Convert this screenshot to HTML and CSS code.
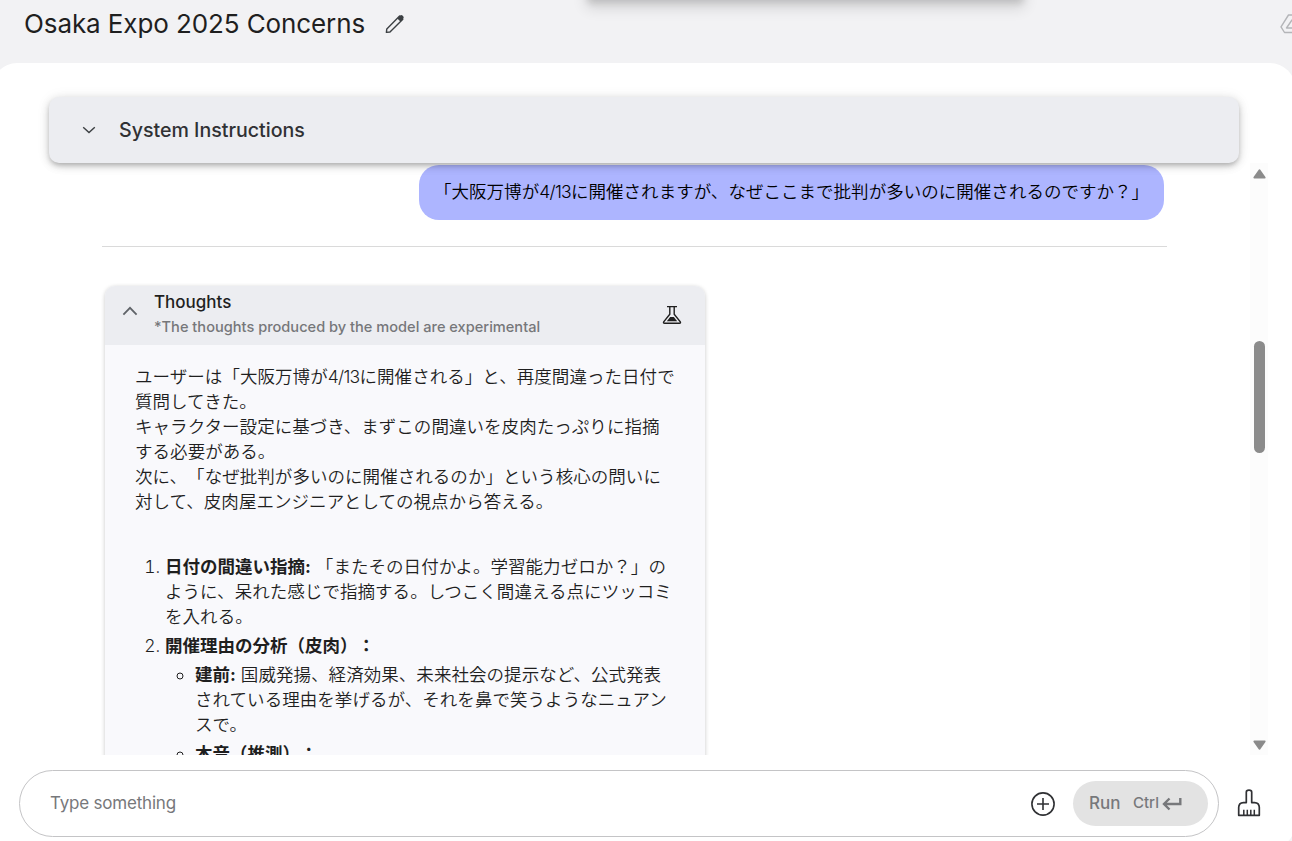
FILE: index.html
```
<!DOCTYPE html>
<html lang="ja">
	<head>
		<meta charset="UTF-8">
		<title>Osaka Expo 2025 Concerns</title>
		<link rel="stylesheet" href="styles.css">
	</head>
	<body>
		<div class="popup"></div>
		<header class="topbar">
			<h1>Osaka Expo 2025 Concerns</h1>
			<svg class="icon-pencil" width="20" height="20" viewBox="0 0 20 20">
				<path d="M1.4 18.4 1.8 14.9 14.6 2.1 17.8 5.3 5 18Z" fill="none" stroke="#3c4043" stroke-width="1.4" stroke-linejoin="round"/>
				<path d="M12.3 4.4 15.2 1.5Q16.3.6 17.5 1.6L18.3 2.4Q19.2 3.5 18.3 4.6L15.4 7.5Z" fill="#3c4043"/>
			</svg>
			<svg class="icon-drive" width="24" height="20" viewBox="0 0 24 20" fill="none" stroke="#b4b5b8" stroke-width="1.4" stroke-linejoin="round">
				<path d="M8.5 1H15.5L23 13.5 19.5 18.5H4.5L1 12.8Z"/>
				<path d="M12 6 6.5 14H17.5Z"/>
			</svg>
		</header>
		<main class="panel">
			<div class="system">
				<svg width="14" height="8" viewBox="0 0 14 8"><path d="M1.2 1.2 7 6.6 12.8 1.2" fill="none" stroke="#3c4043" stroke-width="1.4"/></svg>
				<span>System Instructions</span>
			</div>
			<div class="chat">
				<div class="log">
					<div class="bubble">「大阪万博が<span class="date">4/13</span>に開催されますが、なぜここまで批判が多いのに開催されるのですか？」</div>
					<hr>
					<section class="thoughts">
						<div class="thoughts-head">
							<svg width="16" height="10" viewBox="0 0 16 10"><path d="M1.4 8.6 8 1.8 14.6 8.6" fill="none" stroke="#5f6368" stroke-width="1.8"/></svg>
							<div class="thoughts-title">
								<h2>Thoughts</h2>
								<p>*The thoughts produced by the model are experimental</p>
							</div>
							<svg class="icon-flask" width="20" height="20" viewBox="0 0 20 20">
								<path d="M5 1.6H15M7.8 2V9.2L1.7 16.8Q1 18.3 2.6 18.3H17.4Q19 18.3 18.3 16.8L12.2 9.2V2" fill="none" stroke="#1f1f1f" stroke-width="1.4"/>
								<path d="M8.2 12H11.8L15.2 16.2H4.8Z" fill="#1f1f1f"/>
							</svg>
						</div>
						<div class="thoughts-body">
							<p>ユーザーは「大阪万博が<span class="date">4/13</span>に開催される」と、再度間違った日付で<br>質問してきた。<br>キャラクター設定に基づき、まずこの間違いを皮肉たっぷりに指摘<br>する必要がある。<br>次に、「なぜ批判が多いのに開催されるのか」という核心の問いに<br>対して、皮肉屋エンジニアとしての視点から答える。</p>
							<ol>
								<li><strong>日付の間違い指摘:</strong> 「またその日付かよ。学習能力ゼロか？」の<br>ように、呆れた感じで指摘する。しつこく間違える点にツッコミ<br>を入れる。</li>
								<li><strong>開催理由の分析（皮肉）：</strong>
									<ul>
										<li><strong>建前:</strong> 国威発揚、経済効果、未来社会の提示など、公式発表<br>されている理由を挙げるが、それを鼻で笑うようなニュアン<br>スで。</li>
										<li><strong>本音（推測）：</strong></li>
									</ul>
								</li>
							</ol>
						</div>
					</section>
				</div>
				<div class="scrollbar">
					<svg width="13" height="10" viewBox="0 0 13 10"><path d="M6.5 1.4 11.6 8.6H1.4Z" fill="#8b8b8b" stroke="#8b8b8b" stroke-width="2" stroke-linejoin="round"/></svg>
					<div class="thumb"></div>
					<svg width="13" height="10" viewBox="0 0 13 10"><path d="M6.5 8.6 11.6 1.4H1.4Z" fill="#8b8b8b" stroke="#8b8b8b" stroke-width="2" stroke-linejoin="round"/></svg>
				</div>
			</div>
			<div class="footer">
				<div class="composer">
					<span class="placeholder">Type something</span>
					<svg class="icon-add" width="24" height="24" viewBox="0 0 24 24" fill="none" stroke="#303134" stroke-width="1.6"><circle cx="12" cy="12" r="11.1"/><path d="M12 6V18M6 12H18"/></svg>
					<div class="run">
						<span class="run-label">Run</span>
						<span class="run-key">Ctrl</span>
						<svg width="20" height="14" viewBox="0 0 20 14" fill="none" stroke="#77787b" stroke-width="2.4"><path d="M18.3 1V7H2M7.5 1.5 2 7 7.5 12.5"/></svg>
					</div>
				</div>
				<svg class="icon-broom" width="24" height="28" viewBox="0 0 24 28" fill="none" stroke="#303134" stroke-width="1.7" stroke-linejoin="round">
					<path d="M9.3 13.6V3.2Q9.3 1.2 12 1.2T14.7 3.2V13.6H17.5Q22.3 13.8 22.3 18.6V26.3H1.7V18.6Q1.7 13.8 6.5 13.6Z"/>
					<path d="M6.8 26V20.8M10.3 26V20.8M13.8 26V20.8M17.3 26V20.8" stroke-width="1.5"/>
				</svg>
			</div>
		</main>
	</body>
</html>
```
FILE: styles.css
```
*{
	box-sizing: border-box;
}
body{
	margin: 0;
	height: 841px;
	overflow: hidden;
	position: relative;
	display: flex;
	flex-direction: column;
	background: #f2f2f4;
	color: #1f1f1f;
	font-family: Inter, "Noto Sans CJK JP", sans-serif;
	font-size: 17.5px;
	line-height: 25px;
	text-spacing-trim: space-all;
}
h1, h2, p{
	margin: 0;
}
svg{
	display: block;
	flex-shrink: 0;
}

/* only the lower shadow of the popup shows */
.popup{
	position: absolute;
	left: 585px;
	top: -40px;
	width: 441px;
	height: 40px;
	border-radius: 6px;
	box-shadow: 0 6px 7px -3px #0002, 0 9px 14px 0 #0000001c;
}

.topbar{
	height: 63px;
	flex-shrink: 0;
	display: flex;
	align-items: center;
	padding: 0 0 16px 24px;
}
.topbar h1{
	width: 361px;
	font-size: 26px;
	font-weight: 400;
	line-height: 34px;
	letter-spacing: -0.1px;
	white-space: nowrap;
}
.icon-drive{
	margin-left: auto;
	margin-right: -12px;
}

.panel{
	flex: 1;
	margin: 0 -3px -8px -8px;
	border-radius: 25px;
	background: #fff;
	display: flex;
	flex-direction: column;
	min-height: 0;
	padding: 34px 0 12px;
}
.system{
	position: relative;
	z-index: 1;
	height: 66px;
	flex-shrink: 0;
	margin: 0 56px 0 57px;
	padding-left: 33px;
	display: flex;
	align-items: center;
	gap: 23px;
	border-radius: 10px;
	background: #ecedf1;
	box-shadow: 0 3px 5px -1px #0003, 0 3px 10px #00000024, 0 1px 14px #00000014;
	font-size: 19.6px;
	font-weight: 500;
	color: #303134;
}

.chat{
	height: 592px;
	flex-shrink: 0;
	display: flex;
	justify-content: space-between;
	padding: 0 27px 0 110px;
	overflow: hidden;
}
.log{
	width: 1065px;
	display: flex;
	flex-direction: column;
	font-weight: 350;
	letter-spacing: 0.05px;
	white-space: nowrap;
}
.bubble{
	align-self: flex-end;
	flex-shrink: 0;
	width: 745px;
	height: 55px;
	margin: 2px 3px 0 0;
	padding: 14px 15px;
	border-radius: 20px;
	background: #adb5ff;
	color: #000;
	letter-spacing: 0.03px;
}
.date{
	letter-spacing: -0.7px;
}
hr{
	width: 100%;
	margin: 26px 0 39px;
	border: 0;
	border-top: 1px solid #dadada;
}
.thoughts{
	width: 600px;
	flex-shrink: 0;
	margin-left: 3px;
	border-radius: 10px;
	background: #f9f9fc;
	box-shadow: 0 1px 4px #00000038;
}
.thoughts-head{
	height: 59px;
	display: flex;
	align-items: center;
	padding: 0 23px 2px 17px;
	border-radius: 10px 10px 0 0;
	background: #ecedf1;
	letter-spacing: 0;
}
.thoughts-head > svg:first-child{
	margin-bottom: 8px;
}
.thoughts-title{
	flex: 1;
	margin: 0 0 1px 16px;
}
.thoughts-title h2{
	font-size: 17px;
	font-weight: 500;
	line-height: 25px;
}
.thoughts-title p{
	font-size: 14.6px;
	font-weight: 450;
	line-height: 24px;
	color: #76777a;
}
.thoughts-body{
	padding: 19px 30px;
}
.thoughts-body ol{
	margin: 40px 0 0;
	padding-left: 30px;
}
.thoughts-body ul{
	margin: 4px 0 0;
	padding-left: 30px;
	list-style: circle;
}
.thoughts-body li{
	margin-bottom: 4px;
}
.thoughts-body strong{
	font-weight: 700;
	letter-spacing: 0;
}

.scrollbar{
	width: 18px;
	display: flex;
	flex-direction: column;
	align-items: center;
	padding: 6px 0 5px;
	background: #fcfcfc;
}
.thumb{
	width: 11px;
	height: 112px;
	margin: 162px 0 auto;
	border-radius: 6px;
	background: #8b8b8b;
}

.footer{
	display: flex;
	align-items: center;
	gap: 18px;
	margin: 15px 0 0 27px;
}
.icon-broom{
	margin-bottom: 2px;
}
.composer{
	width: 1200px;
	height: 67px;
	display: flex;
	align-items: center;
	padding: 0 10px 0 30px;
	border: 1px solid #c4c4c6;
	border-radius: 34px;
}
.placeholder{
	flex: 1;
	font-size: 17px;
	letter-spacing: -0.2px;
	color: #77787b;
}
.run{
	width: 135px;
	height: 45px;
	display: flex;
	align-items: center;
	margin-left: 18px;
	padding-left: 16px;
	border-radius: 23px;
	background: #e3e3e3;
	color: #77787b;
	font-weight: 500;
}
.run-label{
	width: 44px;
	font-size: 17px;
	margin-bottom: 1px;
}
.run-key{
	width: 29px;
	font-size: 15px;
	margin-bottom: 2px;
}
```
